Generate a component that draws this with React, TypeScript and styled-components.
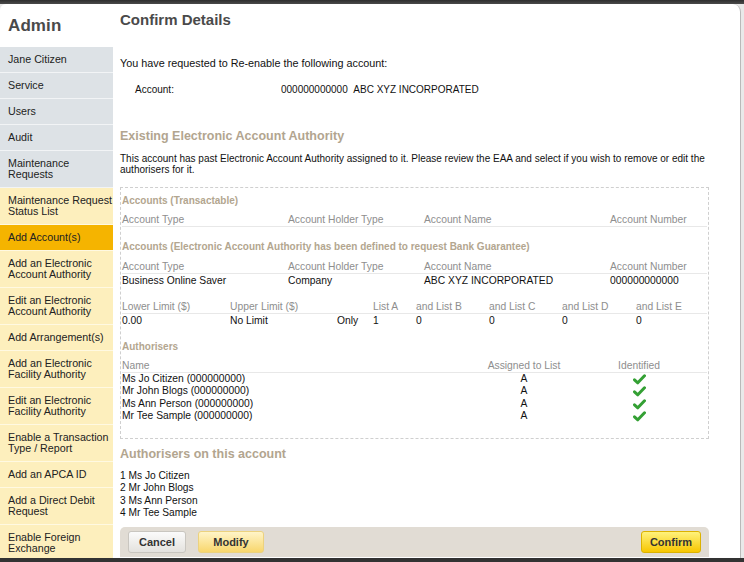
import React from "react";
import styled, { createGlobalStyle } from "styled-components";

const Global = createGlobalStyle`
  html, body { margin: 0; padding: 0; }
  body { background: #3a3a3a; font-family: "Liberation Sans", Arial, sans-serif; font-size: 11px; color: #111; }
  * { box-sizing: border-box; }
`;

const Page = styled.div`
  width: 744px;
  height: 562px;
  display: flex;
  flex-direction: column;
  background: #3a3a3a;
  overflow: hidden;
`;

const TopBar = styled.div`
  height: 4px;
  flex: none;
  background: linear-gradient(#2e2e2e, #4a4a4a);
`;

const Middle = styled.div`
  flex: 1;
  display: flex;
  min-height: 0;
  background: #e9e9e9;
`;

const Windowed = styled.div`
  width: 741px;
  flex: none;
  display: flex;
  background: #fff;
  border-radius: 6px 8px 0 0;
  border-right: 1px solid #b9b9b9;
  overflow: hidden;
`;

const BottomBar = styled.div`
  height: 4px;
  flex: none;
  background: #333;
`;

const Sidebar = styled.nav`
  width: 113px;
  flex: none;
  display: flex;
  flex-direction: column;
`;

const Brand = styled.div`
  height: 43px;
  flex: none;
  padding: 0 8px;
  display: flex;
  align-items: center;
  font-size: 17px;
  font-weight: bold;
  letter-spacing: 0.1px;
  color: #4a4a4a;
`;

type Tone = "gray" | "yellow" | "active";

const NavItem = styled.div<{ $tone: Tone; $tall?: boolean }>`
  height: ${(p) => (p.$tall ? 37 : 26)}px;
  flex: none;
  padding: 0 0 0 8px;
  display: flex;
  align-items: center;
  line-height: 11.5px;
  font-size: 10.7px;
  color: #222;
  white-space: nowrap;
  border-bottom: 1px solid ${(p) => (p.$tone === "gray" ? "#f2f4f6" : "#fff9e2")};
  background: ${(p) =>
    p.$tone === "gray" ? "#dde2e6" : p.$tone === "active" ? "#f5b400" : "#fdefbd"};
`;

const Main = styled.main`
  flex: 1;
  padding: 6px 31px 0 7px;
  display: flex;
  flex-direction: column;
`;

const Title = styled.h1`
  margin: 0;
  font-size: 15px;
  line-height: 20px;
  font-weight: bold;
  color: #4a4a4a;
`;

const Para = styled.p<{ $mt: number; $fs: number }>`
  margin: ${(p) => p.$mt}px 0 0;
  line-height: 11.5px;
  font-size: ${(p) => p.$fs}px;
`;

const AccountRow = styled.div`
  margin-top: 13px;
  display: grid;
  grid-template-columns: 146px auto;
  padding-left: 15px;
  line-height: 13px;
  font-size: 10px;
`;

const Heading = styled.h2<{ $mt: number }>`
  margin: ${(p) => p.$mt}px 0 0;
  font-size: 12.5px;
  line-height: 16px;
  font-weight: bold;
  color: #b2a58f;
`;

const Box = styled.div`
  margin-top: 11px;
  border: 1px dashed #cfcfcf;
  padding: 6px 1px 15px 1px;
`;

const SubTitle = styled.div<{ $mt: number }>`
  margin-top: ${(p) => p.$mt}px;
  font-weight: bold;
  font-size: 10px;
  line-height: 14px;
  color: #b3a68f;
`;

const Table = styled.table<{ $mt: number }>`
  margin-top: ${(p) => p.$mt}px;
  width: 100%;
  border-collapse: collapse;
  table-layout: fixed;
`;

const Th = styled.th<{ $w?: number; $center?: boolean }>`
  width: ${(p) => (p.$w ? `${p.$w}px` : "auto")};
  padding: 0;
  height: 13px;
  line-height: 13px;
  font-size: 10.3px;
  font-weight: normal;
  color: #8e8e8e;
  text-align: ${(p) => (p.$center ? "center" : "left")};
  border-bottom: 1px solid #e8e8e8;
  white-space: nowrap;
`;

const Td = styled.td<{ $center?: boolean; $h?: number }>`
  padding: 0;
  height: ${(p) => p.$h ?? 13}px;
  line-height: ${(p) => p.$h ?? 13}px;
  font-size: 10.3px;
  color: #111;
  text-align: ${(p) => (p.$center ? "center" : "left")};
  white-space: nowrap;
`;

const OnlyCell = styled(Td)`
  padding-left: 2px;
`;

const Check = () => (
  <svg width="13" height="11" viewBox="0 0 13 11" style={{ display: "block", margin: "1px auto 0" }}>
    <path d="M1.5 5.8 L4.8 8.8 L11.5 1.8" fill="none" stroke="#34a034" strokeWidth="3" strokeLinecap="round" strokeLinejoin="round" />
  </svg>
);

const NumList = styled.ol`
  margin: 8px 0 0;
  padding: 0;
  list-style: none;
  line-height: 12.6px;
  font-size: 10.2px;
`;

const ButtonBar = styled.div`
  margin-top: 7px;
  height: 30px;
  background: #e1dcd4;
  border-radius: 5px 5px 0 0;
  display: flex;
  align-items: center;
  padding: 0 8px;
  gap: 12px;
`;

type BtnKind = "plain" | "soft" | "primary";

const Button = styled.button<{ $kind: BtnKind; $w: number }>`
  width: ${(p) => p.$w}px;
  height: 22px;
  margin-top: 1px;
  border-radius: 3px;
  font-family: "Liberation Sans", Arial, sans-serif;
  font-size: 11px;
  font-weight: bold;
  color: #333;
  cursor: pointer;
  border: 1px solid
    ${(p) => (p.$kind === "plain" ? "#c9c6c0" : p.$kind === "soft" ? "#ecd27e" : "#dcb200")};
  background: ${(p) =>
    p.$kind === "plain"
      ? "linear-gradient(#fbfbfb, #e4e2de)"
      : p.$kind === "soft"
      ? "linear-gradient(#fff4c8, #f8d66c)"
      : "linear-gradient(#fff27c, #f7c600)"};
`;

const Spacer = styled.div`
  flex: 1;
`;

const nav: { label: React.ReactNode; tone: Tone; tall?: boolean }[] = [
  { label: "Jane Citizen", tone: "gray" },
  { label: "Service", tone: "gray" },
  { label: "Users", tone: "gray" },
  { label: "Audit", tone: "gray" },
  { label: <>Maintenance<br />Requests</>, tone: "gray", tall: true },
  { label: <>Maintenance Request<br />Status List</>, tone: "yellow", tall: true },
  { label: "Add Account(s)", tone: "active" },
  { label: <>Add an Electronic<br />Account Authority</>, tone: "yellow", tall: true },
  { label: <>Edit an Electronic<br />Account Authority</>, tone: "yellow", tall: true },
  { label: "Add Arrangement(s)", tone: "yellow" },
  { label: <>Add an Electronic<br />Facility Authority</>, tone: "yellow", tall: true },
  { label: <>Edit an Electronic<br />Facility Authority</>, tone: "yellow", tall: true },
  { label: <>Enable a Transaction<br />Type / Report</>, tone: "yellow", tall: true },
  { label: "Add an APCA ID", tone: "yellow" },
  { label: <>Add a Direct Debit<br />Request</>, tone: "yellow", tall: true },
  { label: <>Enable Foreign<br />Exchange</>, tone: "yellow", tall: true },
];

const authorisers = [
  "Ms Jo Citizen",
  "Mr John Blogs",
  "Ms Ann Person",
  "Mr Tee Sample",
];

export default function App() {
  return (
    <Page>
      <Global />
      <TopBar />
      <Middle>
        <Windowed>
          <Sidebar>
            <Brand>Admin</Brand>
            {nav.map((n, i) => (
              <NavItem key={i} $tone={n.tone} $tall={n.tall}>
                <span>{n.label}</span>
              </NavItem>
            ))}
          </Sidebar>
          <Main>
            <Title>Confirm Details</Title>
            <Para $mt={28} $fs={10.8}>You have requested to Re-enable the following account:</Para>
            <AccountRow>
              <span>Account:</span>
              <span>000000000000&nbsp;&nbsp;ABC XYZ INCORPORATED</span>
            </AccountRow>
            <Heading $mt={32}>Existing Electronic Account Authority</Heading>
            <Para $mt={9} $fs={10}>
              This account has past Electronic Account Authority assigned to it. Please review the EAA and select if you wish to remove or edit the authorisers for it.
            </Para>
            <Box>
              <SubTitle $mt={0}>Accounts (Transactable)</SubTitle>
              <Table $mt={5}>
                <thead>
                  <tr>
                    <Th $w={166}>Account Type</Th>
                    <Th $w={136}>Account Holder Type</Th>
                    <Th $w={186}>Account Name</Th>
                    <Th>Account Number</Th>
                  </tr>
                </thead>
              </Table>
              <SubTitle $mt={13}>Accounts (Electronic Account Authority has been defined to request Bank Guarantee)</SubTitle>
              <Table $mt={6}>
                <thead>
                  <tr>
                    <Th $w={166}>Account Type</Th>
                    <Th $w={136}>Account Holder Type</Th>
                    <Th $w={186}>Account Name</Th>
                    <Th>Account Number</Th>
                  </tr>
                </thead>
                <tbody>
                  <tr>
                    <Td>Business Online Saver</Td>
                    <Td>Company</Td>
                    <Td>ABC XYZ INCORPORATED</Td>
                    <Td>000000000000</Td>
                  </tr>
                </tbody>
              </Table>
              <Table $mt={13}>
                <thead>
                  <tr>
                    <Th $w={108}>Lower Limit ($)</Th>
                    <Th $w={105}>Upper Limit ($)</Th>
                    <Th $w={38}></Th>
                    <Th $w={43}>List A</Th>
                    <Th $w={73}>and List B</Th>
                    <Th $w={73}>and List C</Th>
                    <Th $w={74}>and List D</Th>
                    <Th>and List E</Th>
                  </tr>
                </thead>
                <tbody>
                  <tr>
                    <Td>0.00</Td>
                    <Td>No Limit</Td>
                    <OnlyCell>Only</OnlyCell>
                    <Td>1</Td>
                    <Td>0</Td>
                    <Td>0</Td>
                    <Td>0</Td>
                    <Td>0</Td>
                  </tr>
                </tbody>
              </Table>
              <SubTitle $mt={13}>Authorisers</SubTitle>
              <Table $mt={5}>
                <thead>
                  <tr>
                    <Th $w={352}>Name</Th>
                    <Th $w={100} $center>Assigned to List</Th>
                    <Th $w={130} $center>Identified</Th>
                    <Th></Th>
                  </tr>
                </thead>
                <tbody>
                  {authorisers.map((a) => (
                    <tr key={a}>
                      <Td $h={12.5}>{a} (000000000)</Td>
                      <Td $h={12.5} $center>A</Td>
                      <Td $h={12.5} $center><Check /></Td>
                      <Td $h={12.5}></Td>
                    </tr>
                  ))}
                </tbody>
              </Table>
            </Box>
            <Heading $mt={7}>Authorisers on this account</Heading>
            <NumList>
              {authorisers.map((a, i) => (
                <li key={a}>{i + 1} {a}</li>
              ))}
            </NumList>
            <ButtonBar>
              <Button $kind="plain" $w={58}>Cancel</Button>
              <Button $kind="soft" $w={66}>Modify</Button>
              <Spacer />
              <Button $kind="primary" $w={60}>Confirm</Button>
            </ButtonBar>
          </Main>
        </Windowed>
      </Middle>
      <BottomBar />
    </Page>
  );
}
